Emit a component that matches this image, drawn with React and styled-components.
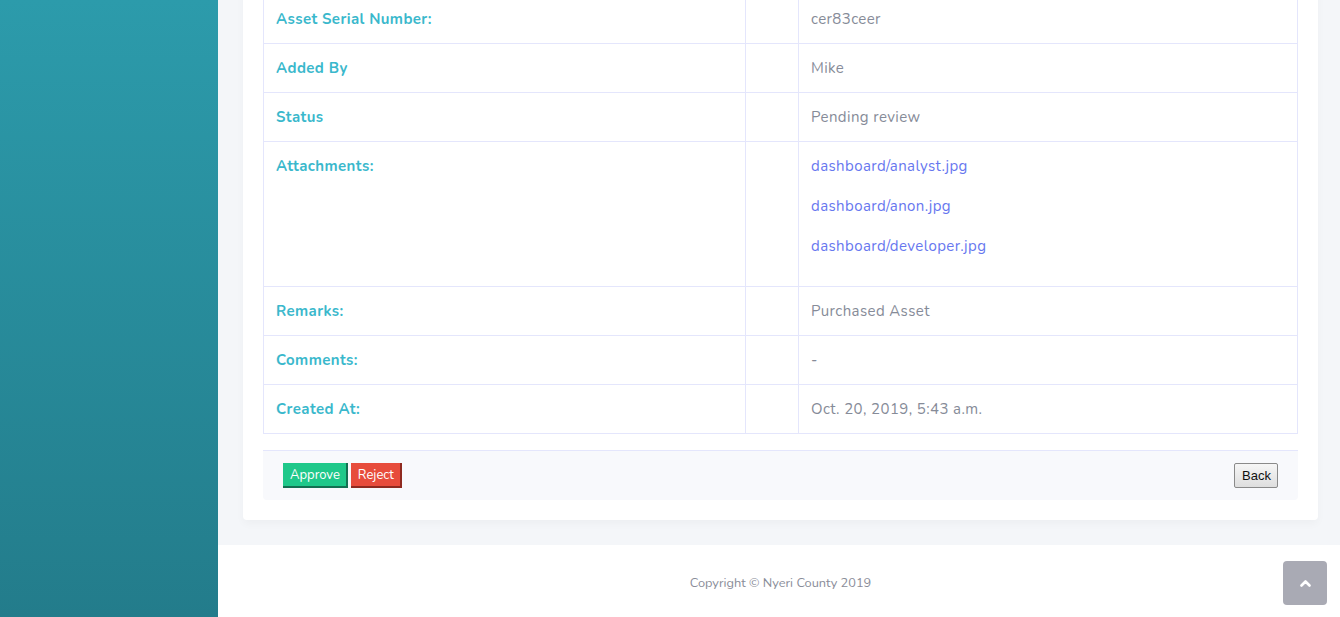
import React from 'react'
import styled, { createGlobalStyle } from 'styled-components'

const GlobalStyle = createGlobalStyle`
  html, body {
    margin: 0;
    padding: 0;
    height: 100%;
    overflow: hidden;
  }
  body {
    font-family: "Nunito", "Noto Sans", "Open Sans", sans-serif;
    background: #f4f6f9;
  }
`

const Layout = styled.div`
  display: flex;
  height: 617px;
  overflow: hidden;
`

const Sidebar = styled.aside`
  width: 218px;
  flex-shrink: 0;
  background: linear-gradient(180deg, #2c9bab 0%, #237c8b 100%);
`

const Main = styled.div`
  flex: 1;
  display: flex;
  flex-direction: column;
  background: #f4f6f9;
  min-width: 0;
`

const Content = styled.section`
  padding: 0 22px 25px 25px;
  margin-top: -26px;
`

const Card = styled.div`
  background: #fff;
  border-radius: 4px;
  box-shadow: 0 4px 8px rgba(0, 0, 0, 0.03);
  padding: 20px 20px 20px;
`

const Table = styled.table`
  width: 100%;
  border-collapse: collapse;
  font-size: 15px;
  letter-spacing: 0.4px;
`

const Row = styled.tr``

const Cell = styled.td`
  border: 1px solid #e4e6fc;
  padding: 12px 12px 12px 12px;
  line-height: 24px;
  vertical-align: top;
  width: ${(p) => p.$width || 'auto'};
`

const Label = styled.span`
  color: #3ab8cc;
  font-weight: 700;
`

const Value = styled.span`
  color: #868b98;
`

const Attachment = styled.a`
  display: block;
  color: #6777ef;
  text-decoration: none;
  margin-bottom: 16px;
`

const CardFooter = styled.div`
  margin-top: 16px;
  background: #f8f9fc;
  border-top: 1px solid #e4e6fc;
  border-radius: 0 0 4px 4px;
  padding: 12px 20px 12px 20px;
  display: flex;
  justify-content: space-between;
  align-items: center;
`

const ButtonGroup = styled.div`
  display: flex;
  gap: 3px;
`

const ActionButton = styled.button`
  font-family: "Nunito", "Noto Sans", "Open Sans", sans-serif;
  font-size: 13px;
  color: #fff;
  background: ${(p) => (p.$variant === 'danger' ? '#e74c3c' : '#1fc88a')};
  border: none;
  border-right: 2px solid ${(p) => (p.$variant === 'danger' ? '#8f2a20' : '#137052')};
  border-bottom: 2px solid ${(p) => (p.$variant === 'danger' ? '#8f2a20' : '#137052')};
  height: 25px;
  padding: 0 6px 0 7px;
  cursor: pointer;
`

const BackButton = styled.button`
  font-family: "Liberation Sans", Arial, sans-serif;
  font-size: 13px;
  color: #111;
  background: linear-gradient(180deg, #f6f6f6 0%, #dedede 100%);
  border: 1px solid #8a8a8a;
  border-radius: 2px;
  height: 25px;
  padding: 0 6px 0 7px;
`

const Footer = styled.footer`
  flex: 1;
  background: #fff;
  display: flex;
  justify-content: center;
  padding-top: 29px;
  padding-left: 3px;
  font-size: 12.8px;
  color: #8a8d99;
`

const ScrollTop = styled.a`
  position: fixed;
  right: 13px;
  bottom: 12px;
  width: 44px;
  height: 44px;
  border-radius: 4px;
  background: #a9aab4;
  display: flex;
  align-items: center;
  justify-content: center;
`

const details = [
  { label: 'Asset Serial Number:', value: 'cer83ceer' },
  { label: 'Added By', value: 'Mike' },
  { label: 'Status', value: 'Pending review' },
  {
    label: 'Attachments:',
    files: ['dashboard/analyst.jpg', 'dashboard/anon.jpg', 'dashboard/developer.jpg'],
  },
  { label: 'Remarks:', value: 'Purchased Asset' },
  { label: 'Comments:', value: '-' },
  { label: 'Created At:', value: 'Oct. 20, 2019, 5:43 a.m.' },
]

const App = () => {
  return (
    <>
      <GlobalStyle />
      <Layout>
        <Sidebar />
        <Main>
          <Content>
            <Card>
              <Table>
                <tbody>
                  {details.map((row) => (
                    <Row key={row.label}>
                      <Cell $width="457px">
                        <Label>{row.label}</Label>
                      </Cell>
                      <Cell $width="28px" />
                      <Cell>
                        {row.files ? (
                          row.files.map((f) => (
                            <Attachment key={f} href="#">
                              {f}
                            </Attachment>
                          ))
                        ) : (
                          <Value>{row.value}</Value>
                        )}
                      </Cell>
                    </Row>
                  ))}
                </tbody>
              </Table>
              <CardFooter>
                <ButtonGroup>
                  <ActionButton>Approve</ActionButton>
                  <ActionButton $variant="danger">Reject</ActionButton>
                </ButtonGroup>
                <BackButton>Back</BackButton>
              </CardFooter>
            </Card>
          </Content>
          <Footer>Copyright © Nyeri County 2019</Footer>
        </Main>
      </Layout>
      <ScrollTop href="#">
        <svg width="11" height="8" viewBox="0 0 11 8">
          <path
            d="M1.5 6.5 L5.5 2.5 L9.5 6.5"
            fill="none"
            stroke="#fff"
            strokeWidth="2.6"
            strokeLinecap="round"
            strokeLinejoin="round"
          />
        </svg>
      </ScrollTop>
    </>
  )
}

export default App
